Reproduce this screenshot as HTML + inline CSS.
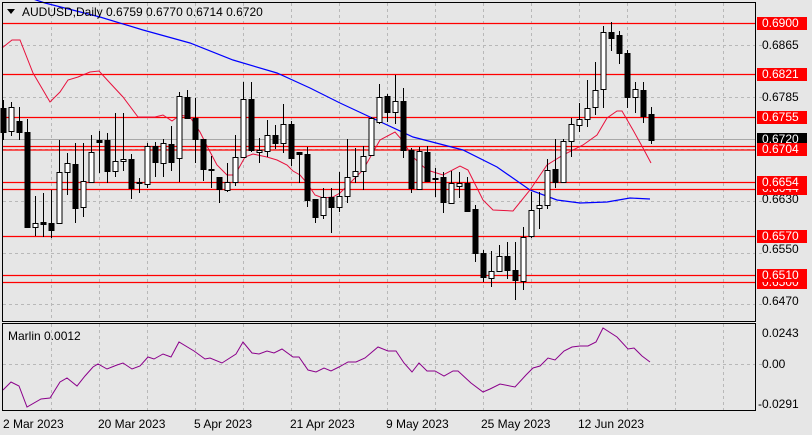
<!DOCTYPE html>
<html><head><meta charset="utf-8"><style>
html,body{margin:0;padding:0;background:#e6e6e6;width:812px;height:435px;overflow:hidden}
svg{display:block;font-family:"Liberation Sans",sans-serif}
</style></head><body>
<svg id="s" width="812" height="435" viewBox="0 0 812 435" xmlns="http://www.w3.org/2000/svg">
<rect width="812" height="435" fill="#e6e6e6"/>
<g id="grid" stroke="#b8b8b8" stroke-dasharray="3,3" stroke-width="1"></g>
<g id="lines"></g>
<g id="candles"></g>
<g id="labels" font-size="12"></g>
</svg>
<script>
var NS="http://www.w3.org/2000/svg";
function el(p,t,a,txt){var e=document.createElementNS(NS,t);for(var k in a)e.setAttribute(k,a[k]);if(txt!==undefined)e.textContent=txt;document.getElementById(p).appendChild(e);return e;}
for(var k=1;k<16;k++){var x=3.5+48*k;if(x>755)break;el('grid','line',{x1:x,y1:3,x2:x,y2:321});el('grid','line',{x1:x,y1:324,x2:x,y2:410});}
[45,97,149,201,253,304].forEach(function(y){el('grid','line',{x1:3,y1:y+.5,x2:762,y2:y+.5});});
el('grid','line',{x1:3,y1:364.5,x2:762,y2:364.5});
el('lines','line',{x1:3,y1:139.5,x2:756,y2:139.5,stroke:'#a8a8a8','stroke-width':1});
[23,74,117,146,149.5,182,189,236,275,282].forEach(function(y){el('lines','line',{x1:3,y1:y+.5,x2:756,y2:y+.5,stroke:'#ff0000','stroke-width':1.3});});
el('lines','polyline',{fill:'none',stroke:'#0000ff','stroke-width':1.2,points:"30,-2 45,3 100,17 143,30 190,43 233,60 277,73 310,88 340,103 370,117 413,137 463,150 497,167 530,190 557,200 580,203 607,202 630,198 650,199"});
el('lines','polyline',{fill:'none',stroke:'#e8103c','stroke-width':1,points:"2,48 12,40 20,40 33,73 50,102 60,92 68,80 78,77 90,72 99,71 110,83 123,97 138,117 147,117 155,117 163,115 172,121 180,115 190,117 200,132 208,148 217,165 227,175 235,175 245,157 253,154 267,157 277,160 287,165 293,171 300,175 307,183 315,195 323,198 333,197 340,193 350,183 363,170 380,140 395,132 402,140 413,157 427,170 443,175 460,166 468,170 483,200 493,210 513,211 530,190 547,165 563,155 583,145 597,135 607,118 617,111 622,111 633,130 643,148 651,163"});
var C=[[108,132,100,140,0],[107,131,102,136,1],[121,132,107,140,0],[132,227,119,228,0],[223,227,196,236,1],[222,224,193,237,0],[223,230,190,238,0],[172,223,140,223,1],[163,172,153,195,1],[164,208,143,223,0],[181,207,143,217,1],[152,182,135,182,1],[140,142,131,173,0],[140,171,133,183,0],[161,171,113,177,1],[159,161,113,171,1],[159,188,154,199,0],[182,183,178,193,0],[146,184,143,188,1],[146,162,142,177,0],[143,163,139,177,1],[144,162,126,171,0],[96,158,92,182,1],[97,118,90,118,0],[118,139,98,163,0],[139,169,139,181,0],[169,170,156,188,0],[177,189,177,203,0],[182,190,163,192,1],[157,182,135,186,1],[99,157,82,157,1],[99,150,82,152,0],[150,152,138,163,1],[135,151,120,157,1],[135,143,125,149,0],[124,143,104,153,1],[124,158,121,166,0],[152,154,152,183,0],[154,200,147,207,0],[199,217,199,223,0],[197,215,188,219,1],[197,207,188,233,0],[196,207,172,212,1],[177,196,139,203,1],[171,176,148,183,1],[156,171,146,190,1],[118,155,117,156,1],[97,122,84,124,1],[96,112,94,122,0],[101,112,75,124,1],[101,150,88,158,0],[150,188,148,193,0],[151,189,147,189,1],[152,181,146,182,0],[178,179,168,197,0],[177,202,172,213,0],[183,203,171,203,1],[183,186,172,198,1],[183,211,177,212,0],[209,253,205,262,0],[253,277,250,282,0],[271,278,251,287,1],[256,271,245,271,1],[256,270,242,279,0],[270,280,242,300,0],[237,281,227,290,1],[210,236,192,238,1],[205,208,192,229,1],[170,205,159,209,1],[169,182,139,188,0],[141,182,139,183,1],[124,141,118,157,1],[119,125,103,132,1],[108,119,80,127,1],[90,107,62,115,1],[32,89,26,108,1],[32,38,22,51,0],[35,53,31,64,0],[53,97,50,108,0],[89,97,82,113,1],[90,116,82,123,0],[114,140,107,144,0]];
C.forEach(function(c,i){var x=Math.round(3+8*i)+0.5;
 el('candles','line',{x1:x,y1:c[2],x2:x,y2:c[3],stroke:'#000','stroke-width':1});
 var h=Math.max(c[1]-c[0],1);
 if(c[4])el('candles','rect',{x:x-2.5,y:c[0]+.5,width:5,height:h,fill:'#fff',stroke:'#000','stroke-width':1});
 else el('candles','rect',{x:x-3,y:c[0],width:6,height:h+1,fill:'#000'});
});
el('lines','polyline',{fill:'none',stroke:'#8b008b','stroke-width':1,points:"3,390 11,382 19,386 27,407 41,399 50,398 60,382 67,378 77,386 85,376 93,367 98,364 107,369 117,365 123,363 132,369 140,366 148,357 154,359 163,354 171,357 179,342 194,351 205,359 210,358 222,363 236,354 243,342 252,353 259,354 267,351 274,353 282,349 293,357 299,357 308,370 316,372 324,368 331,371 339,367 348,362 356,362 365,358 378,347 388,351 396,351 404,363 412,372 419,363 427,371 435,371 444,376 453,371 458,371 471,383 483,392 490,389 500,384 515,387 526,375 533,368 540,366 548,358 555,360 564,351 572,347 580,346 588,346 596,342 603,328 617,337 628,349 634,348 642,356 650,362"});
el('lines','rect',{x:2.5,y:2.5,width:753,height:319,fill:'none',stroke:'#000','stroke-width':1});
el('lines','rect',{x:2.5,y:323.5,width:753,height:87,fill:'none',stroke:'#000','stroke-width':1});
el('labels','path',{d:'M7 9 L15 9 L11 14 Z',fill:'#000'});
el('labels','text',{x:22,y:16,'font-size':12,fill:'#000'},'AUDUSD,Daily  0.6759 0.6770 0.6714 0.6720');
el('labels','text',{x:8,y:340,'font-size':12,fill:'#000'},'Marlin 0.0012');
[[45,'0.6865'],[97,'0.6785'],[199,'0.6630'],[249,'0.6550'],[301,'0.6470'],[333,'0.0243'],[364,'0.00'],[404,'-0.0291']].forEach(function(a){el('labels','text',{x:a[1][0]=='-'?758:762,y:a[0]+4,fill:'#000'},a[1]);});
el('labels','rect',{x:757,y:133,width:50,height:13,fill:'#000'});
el('labels','text',{x:762,y:143,fill:'#fff'},'0.6720');
[[188,'0.6644'],[282,'0.6500'],[23,'0.6900'],[74,'0.6821'],[117,'0.6755'],[149,'0.6704'],[182,'0.6654'],[236,'0.6570'],[275,'0.6510']].forEach(function(a){
 el('labels','rect',{x:757,y:a[0]-6,width:50,height:13,fill:'#ff0000'});
 el('labels','text',{x:762,y:a[0]+4,fill:'#fff'},a[1]);});
[[3,'2 Mar 2023'],[98,'20 Mar 2023'],[194,'5 Apr 2023'],[290,'21 Apr 2023'],[386,'9 May 2023'],[481,'25 May 2023'],[578,'12 Jun 2023']].forEach(function(a){el('labels','text',{x:a[0],y:428,fill:'#000'},a[1]);});
</script>
</body></html>
